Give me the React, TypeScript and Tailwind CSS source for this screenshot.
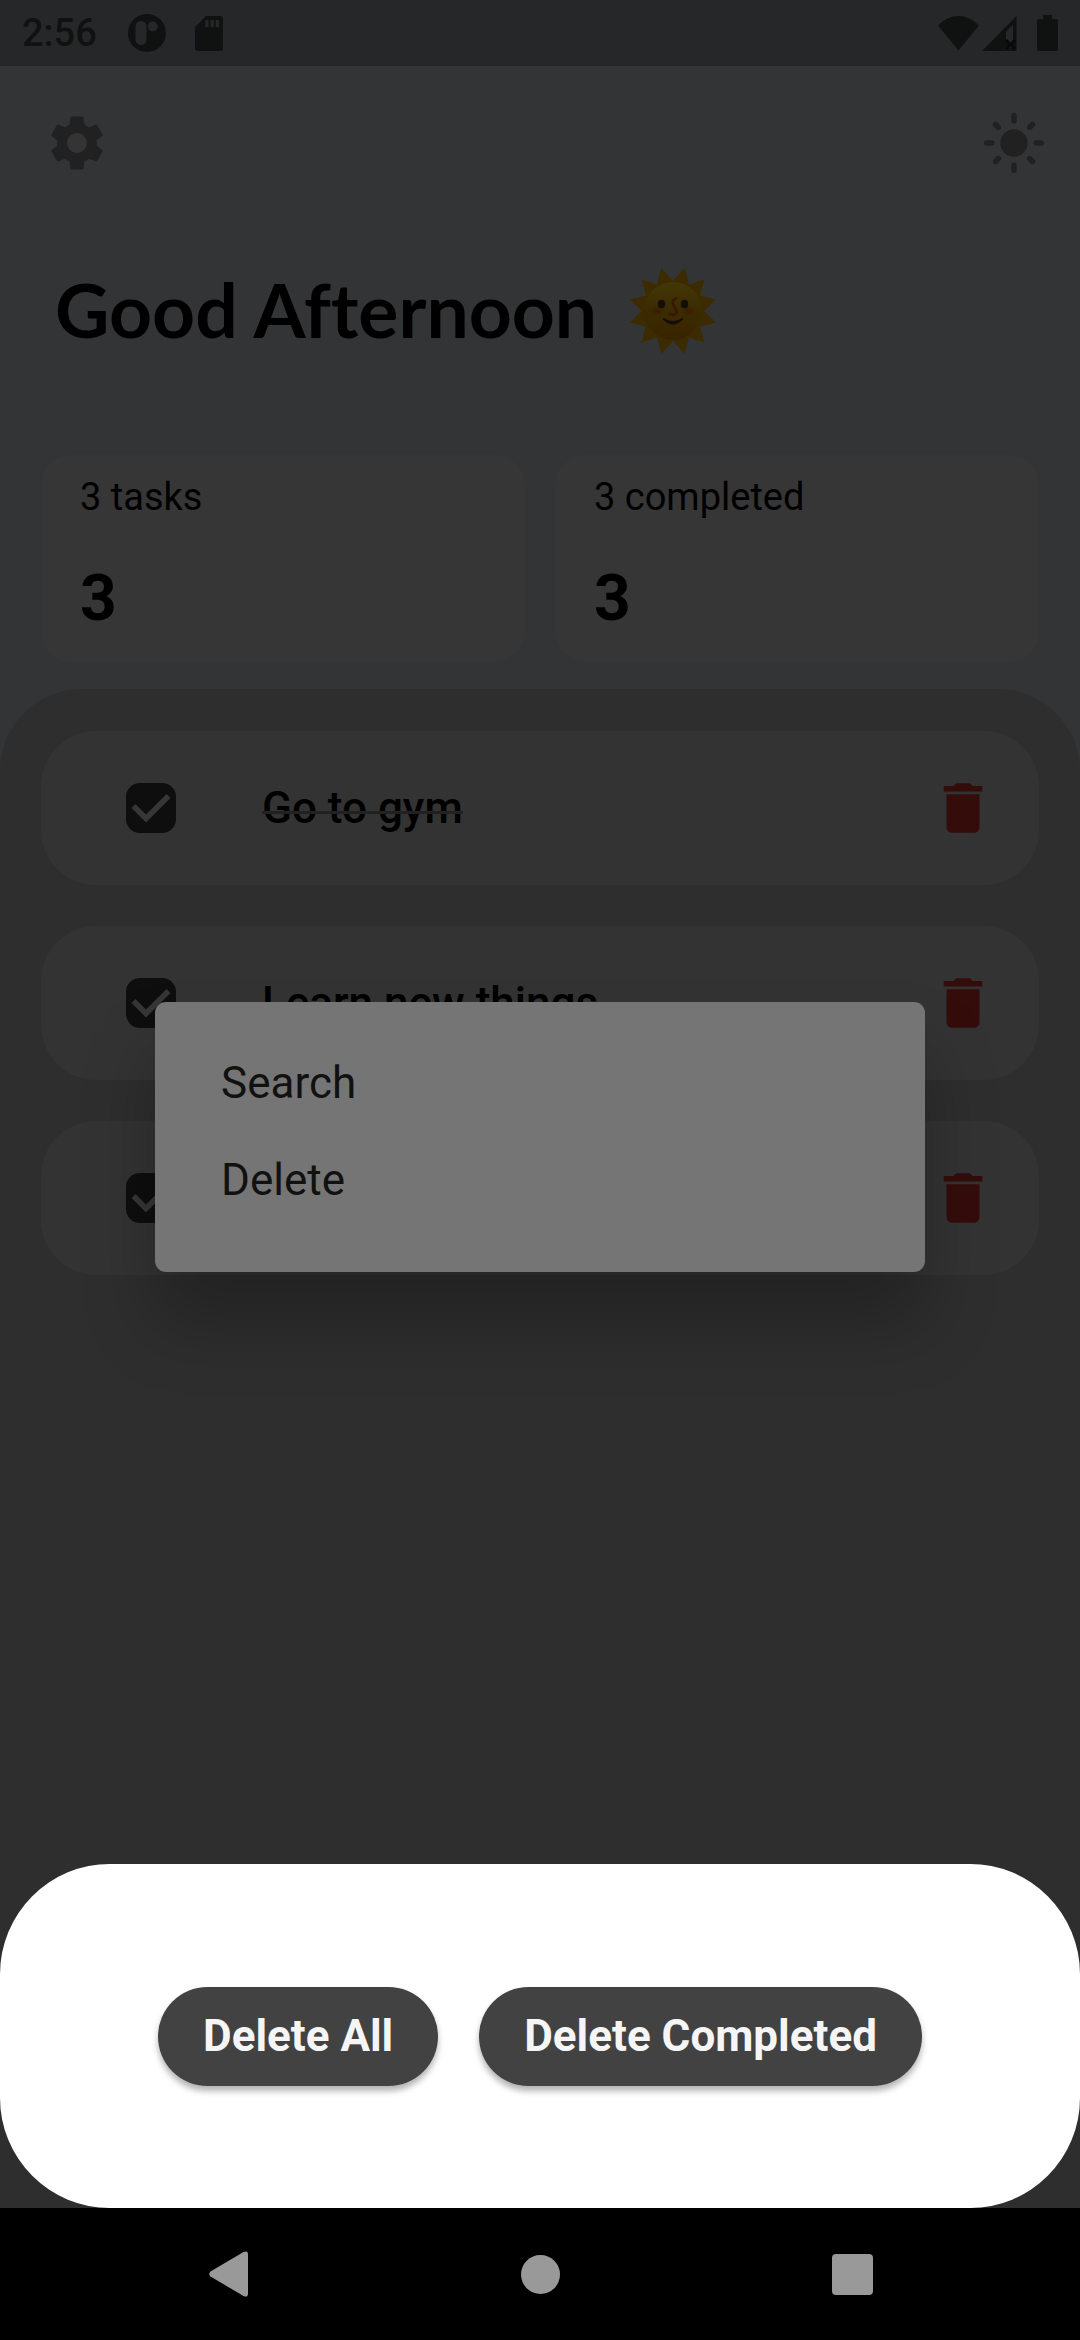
import { MdDelete, MdLightMode, MdSettings } from "react-icons/md";

const tasks = [
  { id: "gym", title: "Go to gym" },
  { id: "learn", title: "Learn new things" },
  { id: "other", title: "" },
];

const stats = [
  { label: "3 tasks", value: "3" },
  { label: "3 completed", value: "3" },
];

function StatusBar() {
  return (
    <header className="flex h-[66px] shrink-0 items-center justify-between bg-[#262728] px-[22px] text-[#101211]">
      <div className="flex items-center">
        <span className="text-[38px] leading-[46px] font-medium">2:56</span>
        <svg className="ml-[31px] size-[38px]" viewBox="0 0 38 38" aria-hidden="true">
          <circle cx="19" cy="19" r="19" fill="currentColor" />
          <rect x="7.500" y="7" width="11" height="24" rx="5.500" fill="#262728" />
          <circle cx="24.800" cy="12.500" r="5" fill="#262728" />
        </svg>
        <svg className="ml-[29px] h-[35px] w-[28px]" viewBox="0 0 28 35" aria-hidden="true">
          <path
            d="M11 0H25Q28 0 28 3V32Q28 35 25 35H3Q0 35 0 32V11Z"
            fill="currentColor"
          />
          <path d="M10.500 4h3v7h-3zM15.500 4h3.200v7h-3.200zM20.700 4h3.200v7h-3.200z" fill="#262728" />
        </svg>
      </div>
      <div className="flex items-center">
        <svg className="h-[35px] w-[41px]" viewBox="0 0 41 35" aria-hidden="true">
          <path d="M0 9.500Q9 0 20.500 0T41 9.500L20.500 34.500Z" fill="currentColor" />
        </svg>
        <svg className="ml-[3px] h-[35px] w-[35px]" viewBox="0 0 35 35" aria-hidden="true">
          <path d="M0 35 34.500 0V35Z" fill="currentColor" />
          <path d="M24 15.500 31 8.500V24L28 28 24 24ZM26 32 28.500 30 31 32Z" fill="#262728" />
          <path d="M24 24 33 33M33 24 24 33" stroke="#080a09" strokeWidth="3" />
        </svg>
        <svg className="ml-[20px] h-[36px] w-[21px]" viewBox="0 0 21 36" aria-hidden="true">
          <path
            d="M6 0H15V4H19Q21 4 21 6V34Q21 36 19 36H2Q0 36 0 34V6Q0 4 2 4H6Z"
            fill="currentColor"
          />
        </svg>
      </div>
    </header>
  );
}

function SunFace() {
  return (
    <svg className="size-[86px]" viewBox="0 0 86 86" role="img" aria-label="Sun with face">
      <defs>
        <linearGradient id="sun-disc" x1="0" y1="0" x2="0" y2="1">
          <stop offset="0" stopColor="#433706" />
          <stop offset="0.5" stopColor="#3b2b01" />
          <stop offset="1" stopColor="#382400" />
        </linearGradient>
        <radialGradient id="sun-cheek">
          <stop offset="0" stopColor="#3c1a02" />
          <stop offset="1" stopColor="#3c1a02" stopOpacity="0" />
        </radialGradient>
      </defs>
      <path
        d="M31.500 0 43 13 54.500 0 59 16.500 74.500 11.500 70 27.500 86 31.500 74 43 86 54.500 70 58.500 74.500 74.500 59 69.500 54.500 86 43 73 31.500 86 27 69.500 11.500 74.500 16 58.500 0 54.500 12 43 0 31.500 16 27.500 11.500 11.500 27 16.500Z"
        fill="#3d2b00"
      />
      <circle cx="43" cy="43" r="29" fill="url(#sun-disc)" />
      <ellipse cx="27" cy="43" rx="7" ry="5" fill="url(#sun-cheek)" />
      <ellipse cx="59" cy="43" rx="7" ry="5" fill="url(#sun-cheek)" />
      <ellipse cx="31.500" cy="36" rx="3.700" ry="4.300" fill="#160d0a" />
      <ellipse cx="54.500" cy="36" rx="3.700" ry="4.300" fill="#160d0a" />
      <path
        d="M46 30.500Q41 32 43.500 37Q49 45 44.500 46.500Q42 47.500 40 46"
        fill="none"
        stroke="#3a1704"
        strokeWidth="2.800"
        strokeLinecap="round"
      />
      <path d="M34 50Q43 56.500 52 50Q53.500 50 53 51.500Q43 61.500 33 51.500Q32.500 50 34 50Z" fill="#160d0a" />
    </svg>
  );
}

function TaskRow({ id, title }: { id: string; title: string }) {
  return (
    <li className="flex h-[154px] items-center rounded-[55px] bg-[#333333] pl-[85px] pr-[43px]">
      <span className="relative flex size-[50px]">
        <input
          id={id}
          type="checkbox"
          defaultChecked
          aria-label={title || "Task"}
          className="peer size-[50px] appearance-none rounded-[14px] bg-[#0e0e0e]"
        />
        <svg
          className="pointer-events-none absolute inset-0 hidden size-[50px] peer-checked:block"
          viewBox="0 0 50 50"
          aria-hidden="true"
        >
          <path d="M7.500 23 20 35.500 42.500 13" fill="none" stroke="#363636" strokeWidth="5.500" />
        </svg>
      </span>
      <label
        htmlFor={id}
        className="relative ml-[86px] text-[44px] leading-[52px] font-medium text-black after:absolute after:inset-x-0 after:top-[29px] after:h-[3px] after:bg-[#212121]"
      >
        {title}
      </label>
      <button type="button" aria-label="Delete task" className="ml-auto text-[#340d0b]">
        <MdDelete className="size-[66px]" />
      </button>
    </li>
  );
}

function NavigationBar() {
  return (
    <nav className="flex h-[132px] shrink-0 items-center justify-between bg-black px-[195px] text-[#999999]">
      <button type="button" aria-label="Back" className="flex size-[66px] items-center justify-center">
        <svg className="h-[46px] w-[39px]" viewBox="0 0 39 46" aria-hidden="true">
          <path
            d="M1.500 20.500 34.500 1Q39 -1 39 3.500V42.500Q39 47 34.500 45L1.500 25.500Q-1 23 1.500 20.500Z"
            fill="currentColor"
          />
        </svg>
      </button>
      <button type="button" aria-label="Home" className="flex size-[66px] items-center justify-center">
        <span className="size-[39px] rounded-full bg-[#999999]" />
      </button>
      <button type="button" aria-label="Recent apps" className="flex size-[66px] items-center justify-center">
        <span className="size-[41px] rounded-[4px] bg-[#999999]" />
      </button>
    </nav>
  );
}

export default function App() {
  return (
    <div className="flex min-h-screen flex-col bg-[#2e2e2e] font-['Roboto',sans-serif]">
      <StatusBar />
      <div className="relative flex flex-1 flex-col">
        <main className="flex flex-1 flex-col bg-[#333436]">
          <div className="flex justify-between pl-[44px] pr-[33px] pt-[44px] text-[#212121]">
            <button type="button" aria-label="Settings">
              <MdSettings className="size-[66px]" />
            </button>
            <button type="button" aria-label="Light mode">
              <MdLightMode className="size-[66px]" />
            </button>
          </div>
          <div className="mt-[88px] flex items-center gap-[33px] pl-[55px]">
            <h1 className="pb-1 font-['Lato',sans-serif] text-[75px] leading-[90px] font-bold text-black [font-variant-ligatures:none]">
              Good Afternoon
            </h1>
            <SunFace />
          </div>
          <section className="mt-[97px] grid grid-cols-2 gap-[30px] px-[41px]">
            {stats.map((s) => (
              <div key={s.label} className="h-[207px] rounded-[30px] bg-[#363636] px-[39px] pt-[19px] text-black">
                <p className="text-[38px] leading-[46px]">{s.label}</p>
                <p className="mt-[40px] text-[64px] leading-[78px] font-bold">{s.value}</p>
              </div>
            ))}
          </section>
          <ul className="mt-[27px] flex flex-1 flex-col gap-[41px] rounded-t-[82px] bg-[#2e2e2e] px-[41px] pt-[42px]">
            {tasks.map((t) => (
              <TaskRow key={t.id} id={t.id} title={t.title} />
            ))}
          </ul>
        </main>

        <div className="absolute inset-0 flex items-center px-[155px]">
          <div
            role="menu"
            className="flex w-full flex-col items-start rounded-[11px] bg-[#757575] px-[66px] pt-[55px] pb-[66px] text-[44px] leading-[52px] text-[#111111] shadow-[0_50px_70px_rgba(0,0,0,0.25)]"
          >
            <button type="button" role="menuitem">
              Search
            </button>
            <button type="button" role="menuitem" className="mt-[45px]">
              Delete
            </button>
          </div>
        </div>

        <section
          role="dialog"
          aria-label="Delete tasks"
          className="absolute inset-x-0 bottom-0 flex h-[344px] items-center justify-center gap-[41px] rounded-[110px] bg-white"
        >
          <button
            type="button"
            className="h-[99px] rounded-full bg-[#424242] px-[45px] text-[44px] leading-[52px] font-bold text-[#f5f5f5] shadow-[0_5px_6px_rgba(0,0,0,0.3)]"
          >
            Delete All
          </button>
          <button
            type="button"
            className="h-[99px] rounded-full bg-[#424242] px-[45px] text-[44px] leading-[52px] font-bold text-[#f5f5f5] shadow-[0_5px_6px_rgba(0,0,0,0.3)]"
          >
            Delete Completed
          </button>
        </section>
      </div>
      <NavigationBar />
    </div>
  );
}
